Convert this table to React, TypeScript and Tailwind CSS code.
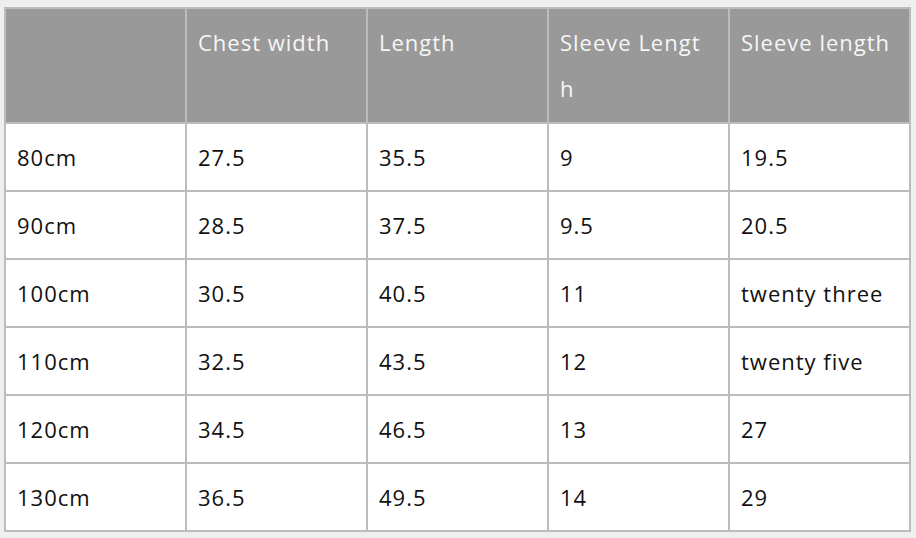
import React from 'react';

const headers = ['', 'Chest width', 'Length', 'Sleeve Length', 'Sleeve length'];

const rows = [
  ['80cm', '27.5', '35.5', '9', '19.5'],
  ['90cm', '28.5', '37.5', '9.5', '20.5'],
  ['100cm', '30.5', '40.5', '11', 'twenty three'],
  ['110cm', '32.5', '43.5', '12', 'twenty five'],
  ['120cm', '34.5', '46.5', '13', '27'],
  ['130cm', '36.5', '49.5', '14', '29'],
];

const App = () => {
  return (
    <div className="min-h-screen w-full bg-[#efefef] pl-[4px] pt-[7px] font-['Open_Sans',sans-serif]">
      <table className="w-[907px] table-fixed border-collapse border-2 border-[#bcbcbc] text-[22px] leading-[46px] tracking-[1px]">
        <thead>
          <tr className="bg-[#999999] text-[#f6f6f6]">
            {headers.map((h, i) => (
              <th
                key={i}
                className="h-[115px] border-2 border-[#bcbcbc] px-[11px] py-[10px] text-left align-top font-normal"
              >
                {h === 'Sleeve Length' ? (
                  <>
                    Sleeve Lengt
                    <br />h
                  </>
                ) : (
                  <span className="whitespace-nowrap">{h}</span>
                )}
              </th>
            ))}
          </tr>
        </thead>
        <tbody>
          {rows.map((r, i) => (
            <tr key={i} className="bg-white text-[#111111]">
              {r.map((c, j) => (
                <td
                  key={j}
                  className="h-[68px] whitespace-nowrap border-2 border-[#bcbcbc] px-[11px] py-[10px] text-left align-middle"
                >
                  {c}
                </td>
              ))}
            </tr>
          ))}
        </tbody>
      </table>
    </div>
  );
};

export default App;
